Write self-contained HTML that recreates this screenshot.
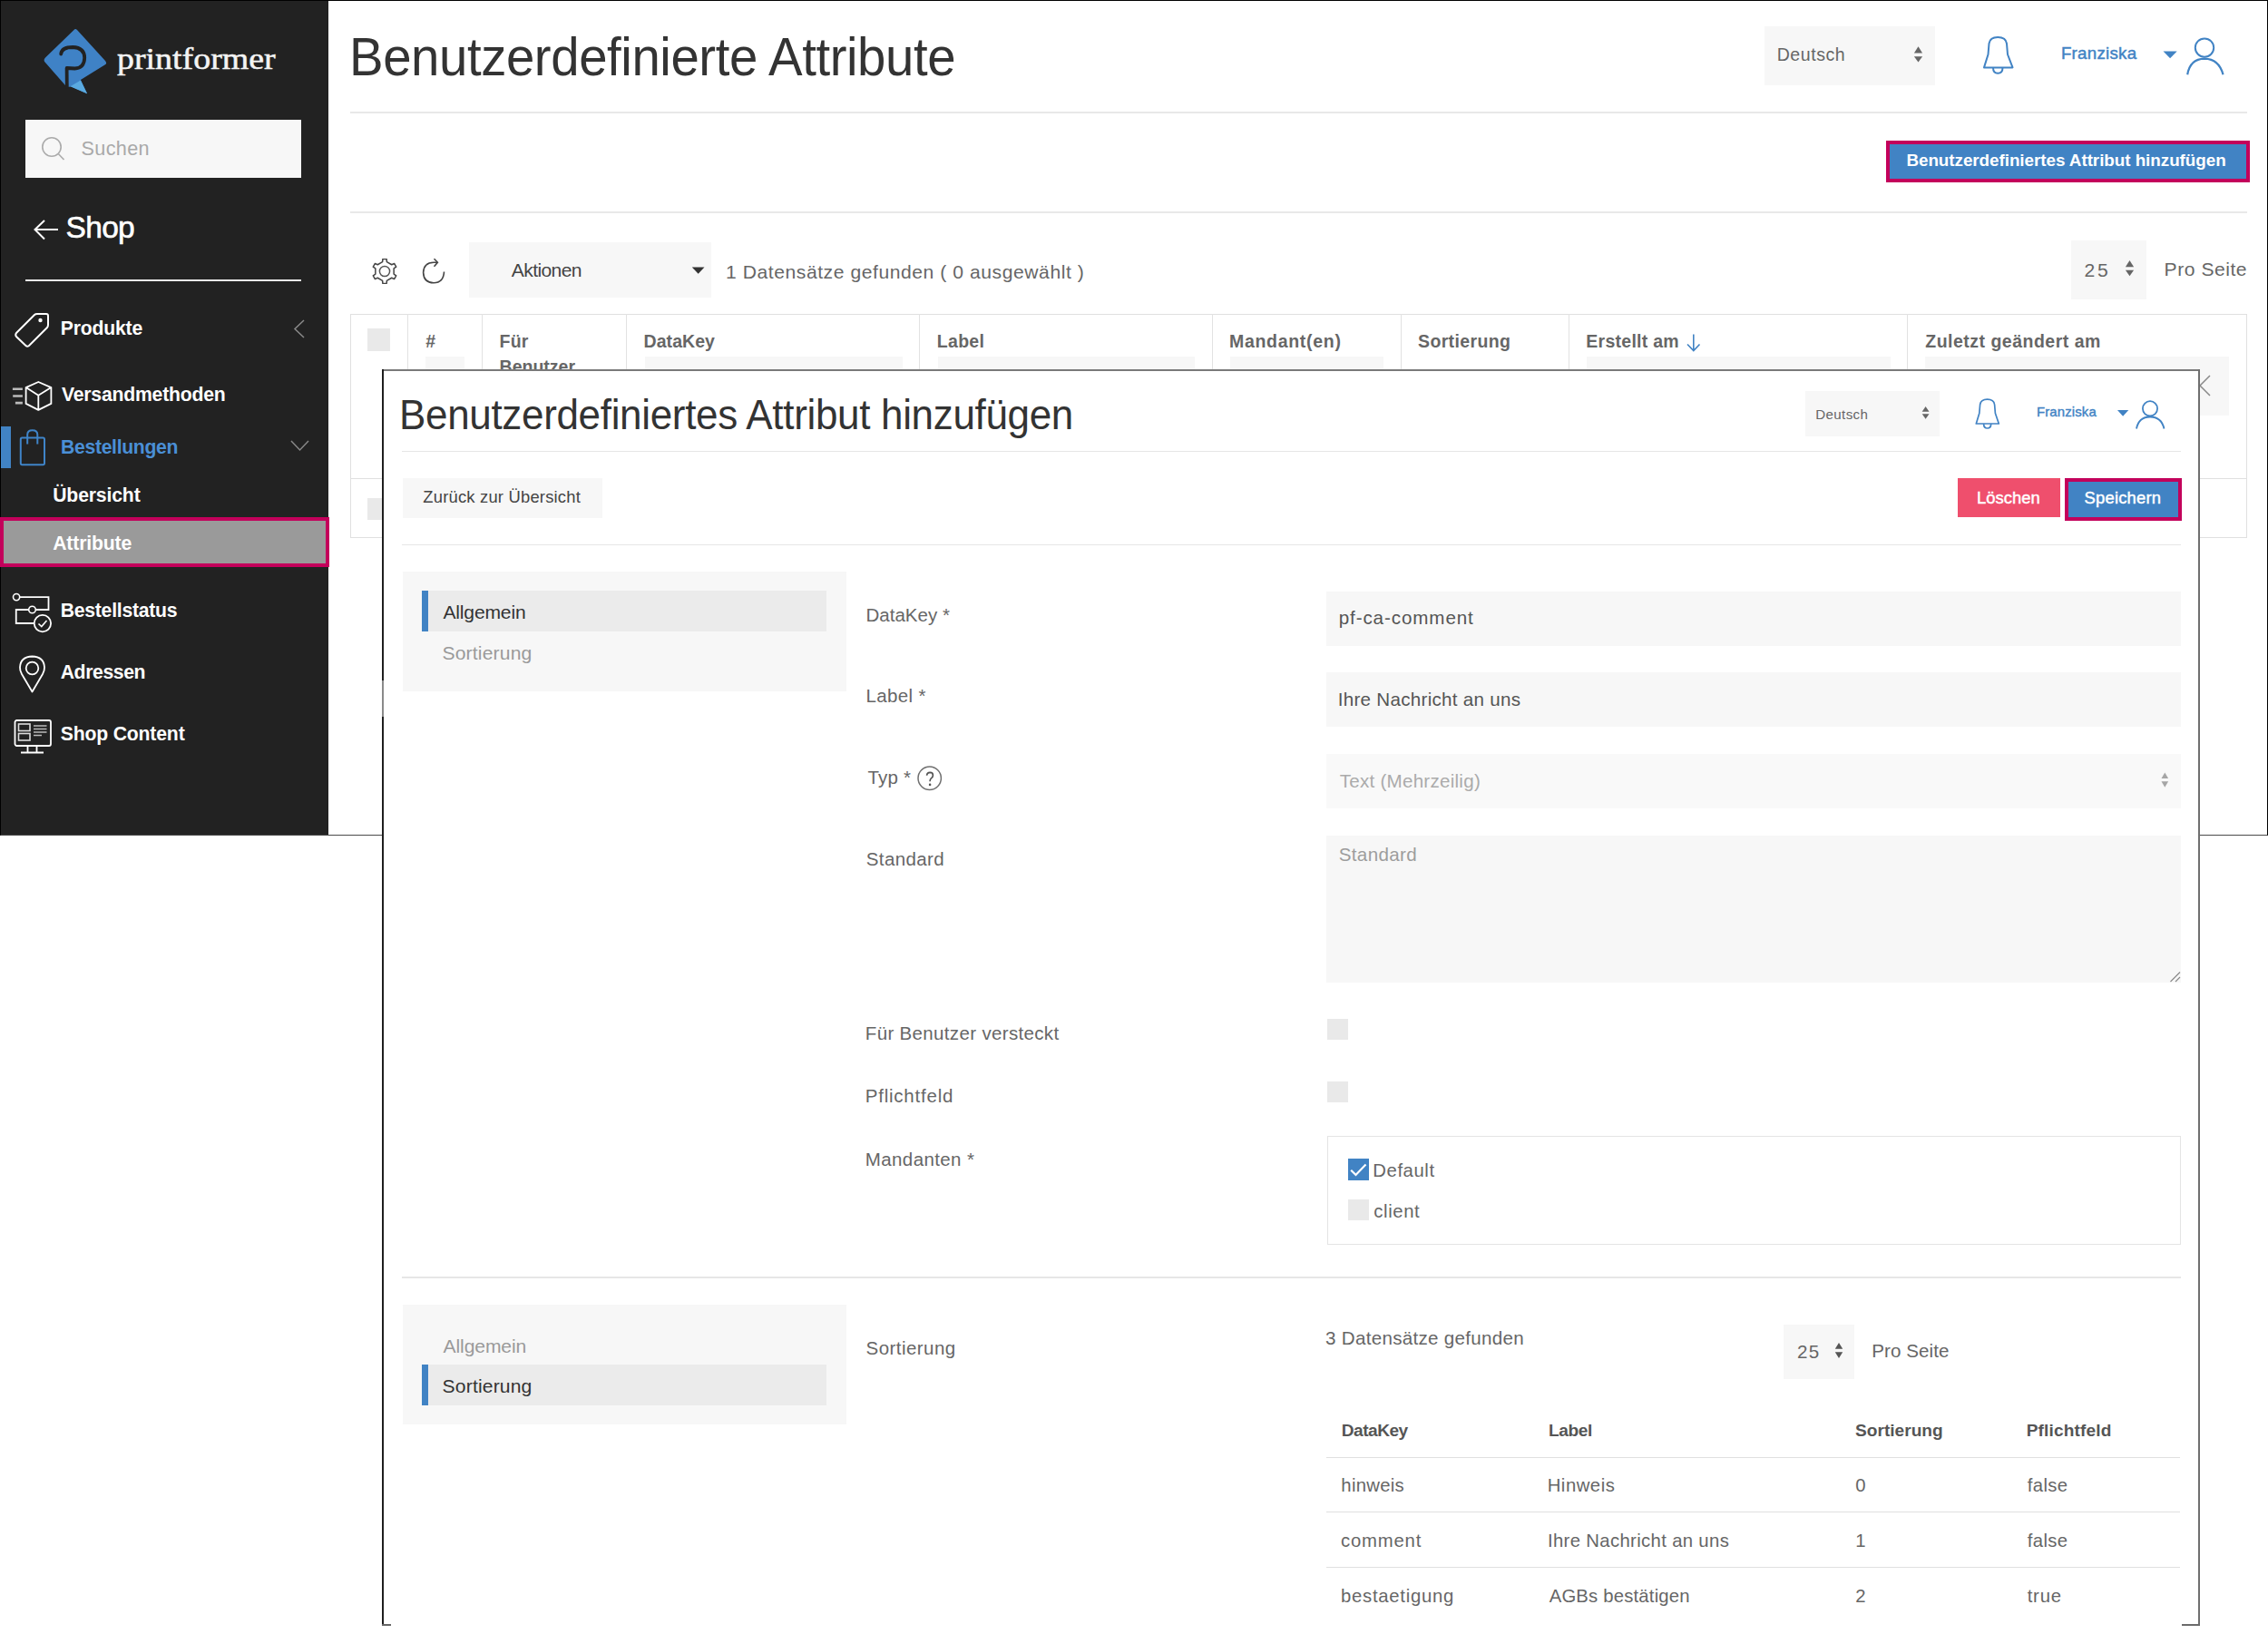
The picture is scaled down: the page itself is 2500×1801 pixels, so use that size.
<!DOCTYPE html>
<html><head><meta charset="utf-8"><title>Benutzerdefinierte Attribute</title>
<style>
html,body{margin:0;padding:0;background:#fff;width:2500px;height:1801px;overflow:hidden;position:relative}
body{font-family:"Liberation Sans",sans-serif}
.b{position:absolute;display:block}
.t{position:absolute;line-height:1;white-space:nowrap;font-family:"Liberation Sans",sans-serif}
</style></head><body>
<div class="b" style="left:0px;top:0px;width:2500px;height:921px;background:#fff;border-top:1px solid #000;border-left:1px solid #000;border-right:1px solid #000;border-bottom:1px solid #4a4a4a;box-sizing:border-box"></div>
<div class="b" style="left:1px;top:1px;width:361px;height:919px;background:#222222;"></div>
<svg class="b" style="left:40px;top:25px;" width="90" height="85" viewBox="0 0 90 85"><path d="M41.5 8 Q43 6 45 8 L76 42 Q78.5 45 75.5 46.5 L48.9 63.1 L56.1 78.3 L38.3 70.4 L33.7 71.1 L10 44 Q7.2 41.3 10 38.5 Z" fill="#3f82c6"/><path d="M37.5 70.2 L48.9 63.5 L56.1 78.3 Z" fill="#5aaae0"/><path d="M27.2 34.5 Q28 27 40.3 27 Q53 27.5 53.2 38.7 Q52.8 50 42.5 50.5 L33.6 50 L33.8 71" fill="none" stroke="#222222" stroke-width="3.8" stroke-linecap="round" stroke-linejoin="round"/></svg>
<div class="t" style="left:129px;top:47.5px;font-family:'Liberation Serif',serif;font-size:34px;font-weight:400;color:#f4f4f4;transform:scaleX(1.115);transform-origin:0 0;-webkit-text-stroke:0.5px #f4f4f4">printformer</div>
<div class="b" style="left:28px;top:132px;width:304px;height:64px;background:#f7f7f7;"></div>
<svg class="b" style="left:44px;top:148px;" width="32" height="32" viewBox="0 0 32 32"><circle cx="13" cy="14" r="10.2" fill="none" stroke="#ababab" stroke-width="1.6"/><line x1="20.5" y1="21.8" x2="26.5" y2="28" stroke="#ababab" stroke-width="1.6"/></svg>
<div class="t" style="left:89.5px;top:152.5px;font-size:21.65px;font-weight:400;color:#a9a9a9;letter-spacing:0.34px;">Suchen</div>
<svg class="b" style="left:34px;top:238px;" width="34" height="30" viewBox="0 0 34 30"><path d="M30 15 L5 15 M15 5 L4.5 15 L15 25.5" fill="none" stroke="#fff" stroke-width="2"/></svg>
<div class="t" style="left:72.6px;top:233.5px;font-size:33.52px;font-weight:400;color:#ffffff;letter-spacing:-0.73px;-webkit-text-stroke:0.6px #ffffff;">Shop</div>
<div class="b" style="left:28px;top:308px;width:304px;height:2px;background:#e8e8e8;"></div>
<svg class="b" style="left:13.3px;top:341.4px;" width="46" height="44" viewBox="0 0 46 44"><path d="M5 26 L25 6 Q26 5 28 5 L38 5 Q40 5 40 7 L40 17 Q40 19 39 20 L19 40 Q17 41.5 15.5 40 L5 30 Q3.5 28 5 26 Z" fill="none" stroke="#fff" stroke-width="2"/><circle cx="31.5" cy="12" r="2.2" fill="#fff"/></svg>
<div class="t" style="left:66.8px;top:350.8px;font-size:21.20px;font-weight:700;color:#ffffff;letter-spacing:-0.20px;">Produkte</div>
<svg class="b" style="left:320px;top:350px;" width="20" height="26" viewBox="0 0 20 26"><path d="M15 3 L5 12.5 L15 22" fill="none" stroke="#8a8a8a" stroke-width="1.5"/></svg>
<svg class="b" style="left:10px;top:415px;" width="52" height="42" viewBox="0 0 52 42"><path d="M32.3 6 L46.4 12.1 L46.4 29.9 L32.3 36.9 L18.6 29.9 L18.6 12.1 Z M18.6 12.1 L32.3 20.7 L46.4 12.1 M32.3 20.7 L32.3 36.9" fill="none" stroke="#fff" stroke-width="1.8" stroke-linejoin="round"/><path d="M3.9 13.7 L14.9 13.7 M4.2 21.5 L14.9 21.5 M6.9 29.1 L14.9 29.1" stroke="#bbb" stroke-width="2.6"/></svg>
<div class="t" style="left:68.0px;top:424.1px;font-size:21.20px;font-weight:700;color:#ffffff;letter-spacing:-0.21px;">Versandmethoden</div>
<div class="b" style="left:1px;top:470px;width:11px;height:46px;background:#4183c4;"></div>
<svg class="b" style="left:18px;top:470px;" width="36" height="48" viewBox="0 0 36 48"><rect x="4.8" y="12.6" width="26.2" height="29.6" rx="1.6" fill="none" stroke="#3f84c8" stroke-width="2"/><path d="M12.2 19.6 L12.2 9 Q12.2 4.2 17.7 4.2 Q23.3 4.2 23.3 9 L23.3 19.6" fill="none" stroke="#3f84c8" stroke-width="2"/></svg>
<div class="t" style="left:67.0px;top:481.7px;font-size:21.20px;font-weight:700;color:#4a8fd6;letter-spacing:-0.32px;">Bestellungen</div>
<svg class="b" style="left:318px;top:482px;" width="26" height="20" viewBox="0 0 26 20"><path d="M3 4 L12.5 14 L22 4" fill="none" stroke="#888" stroke-width="1.5"/></svg>
<div class="t" style="left:58.2px;top:534.8px;font-size:21.20px;font-weight:700;color:#ffffff;letter-spacing:-0.15px;">Übersicht</div>
<div class="b" style="left:0px;top:570px;width:363px;height:55px;background:#9a9a9a;border:4px solid #c3005b;box-sizing:border-box"></div>
<div class="t" style="left:58.2px;top:588.3px;font-size:21.20px;font-weight:700;color:#ffffff;letter-spacing:-0.15px;">Attribute</div>
<svg class="b" style="left:10px;top:650px;" width="50" height="50" viewBox="0 0 50 50"><circle cx="8.1" cy="8.1" r="3.6" fill="none" stroke="#fff" stroke-width="1.6"/><path d="M11.7 8.1 L43.5 8.1 L43.5 22 L29.5 22 M21.8 22 L7.75 22 L7.75 37 L27.3 37" fill="none" stroke="#fff" stroke-width="1.8"/><circle cx="25.5" cy="22" r="3.8" fill="none" stroke="#fff" stroke-width="1.6"/><circle cx="36.9" cy="37.1" r="9.2" fill="none" stroke="#fff" stroke-width="1.8"/><path d="M32.5 37.5 L35.8 40.5 L41.5 34" fill="none" stroke="#fff" stroke-width="1.6"/></svg>
<div class="t" style="left:66.7px;top:661.9px;font-size:21.20px;font-weight:700;color:#ffffff;letter-spacing:-0.25px;">Bestellstatus</div>
<svg class="b" style="left:18px;top:720px;" width="36" height="46" viewBox="0 0 36 46"><path d="M17.5 42.5 L6 23 Q3.8 19 4 15.5 Q4.5 4 17.5 3.5 Q30.5 4 31 15.5 Q31.2 19 29 23 Z" fill="none" stroke="#fff" stroke-width="1.8" stroke-linejoin="round"/><circle cx="17.5" cy="16.5" r="6.8" fill="none" stroke="#fff" stroke-width="1.8"/></svg>
<div class="t" style="left:66.7px;top:729.8px;font-size:21.20px;font-weight:700;color:#ffffff;letter-spacing:-0.39px;">Adressen</div>
<svg class="b" style="left:12px;top:790px;" width="48" height="44" viewBox="0 0 48 44"><rect x="4.5" y="4" width="39.5" height="28" rx="2" fill="none" stroke="#fff" stroke-width="1.8"/><rect x="8.5" y="8" width="12.5" height="7.5" fill="none" stroke="#ddd" stroke-width="1.6"/><rect x="8.5" y="18.5" width="12.5" height="7.5" fill="none" stroke="#ddd" stroke-width="1.6"/><path d="M25 10 L39.5 10 M25 13.5 L39.5 13.5 M25 17 L39.5 17 M25 20.5 L34 20.5" stroke="#bbb" stroke-width="1.6"/><path d="M18.5 32 L18.5 39 M28.5 32 L28.5 39 M11 39.5 L36 39.5" stroke="#fff" stroke-width="1.8"/></svg>
<div class="t" style="left:66.7px;top:798.4px;font-size:21.20px;font-weight:700;color:#ffffff;letter-spacing:-0.17px;">Shop Content</div>
<div class="t" style="left:384.5px;top:33.6px;font-size:58.40px;font-weight:400;color:#333333;letter-spacing:-0.43px;transform:scaleX(0.965);transform-origin:0 0;">Benutzerdefinierte Attribute</div>
<div class="b" style="left:386px;top:123px;width:2091px;height:2px;background:#e8e8e8;"></div>
<div class="b" style="left:1945px;top:29px;width:188px;height:65px;background:#f7f7f7;"></div>
<div class="t" style="left:1958.7px;top:51.4px;font-size:19.55px;font-weight:400;color:#666666;letter-spacing:0.55px;">Deutsch</div>
<svg class="b" style="left:0;top:0" width="2500" height="1801"><polygon points="2109.9,58.4 2119.1,58.4 2114.5,51.3" fill="#666"/><polygon points="2109.9,62.3 2119.1,62.3 2114.5,68.5" fill="#666"/></svg>
<svg class="b" style="left:2180px;top:36px;" width="46" height="50" viewBox="0 0 46 50"><path d="M7 38.4 L11.5 24 L12.5 12 Q13.5 5 22.2 5 Q31 5 32 12 L33 24 L38.5 38.4 Z" fill="none" stroke="#4183c4" stroke-width="2" stroke-linejoin="round"/><path d="M17 38.5 Q17 44.8 22.2 44.8 Q27.5 44.8 27.5 38.5" fill="none" stroke="#4183c4" stroke-width="2"/></svg>
<div class="t" style="left:2271.9px;top:50.2px;font-size:18.72px;font-weight:400;color:#4183c4;letter-spacing:0.27px;-webkit-text-stroke:0.45px #4183c4;">Franziska</div>
<svg class="b" style="left:2380px;top:52px;" width="24" height="16" viewBox="0 0 24 16"><polygon points="4.5,4.5 19.7,4.5 12.1,12.2" fill="#4183c4"/></svg>
<svg class="b" style="left:2404px;top:36px;" width="54" height="52" viewBox="0 0 54 52"><circle cx="26" cy="16.6" r="10.2" fill="none" stroke="#4183c4" stroke-width="2"/><path d="M7.2 46.2 Q10 29 26 28.6 Q42 29 46.5 46.2" fill="none" stroke="#4183c4" stroke-width="2.2"/></svg>
<div class="b" style="left:2079px;top:155px;width:401px;height:46px;background:#4183c4;border:4px solid #c3005b;box-sizing:border-box"></div>
<div class="t" style="left:2101.4px;top:168.4px;font-size:18.85px;font-weight:700;color:#ffffff;letter-spacing:-0.05px;">Benutzerdefiniertes Attribut hinzufügen</div>
<div class="b" style="left:386px;top:233px;width:2091px;height:2px;background:#e8e8e8;"></div>
<svg class="b" style="left:410px;top:285px;" width="28" height="28" viewBox="0 0 28 28"><path d="M11.62 3.67 L11.87 0.57 L16.13 0.57 L16.38 3.67 L21.75 6.77 L24.57 5.44 L26.70 9.13 L24.14 10.90 L24.14 17.10 L26.70 18.87 L24.57 22.56 L21.75 21.23 L16.38 24.33 L16.13 27.43 L11.87 27.43 L11.62 24.33 L6.25 21.23 L3.43 22.56 L1.30 18.87 L3.86 17.10 L3.86 10.90 L1.30 9.13 L3.43 5.44 L6.25 6.77 Z" fill="none" stroke="#444" stroke-width="1.5" stroke-linejoin="round"/><circle cx="14" cy="14" r="5.6" fill="none" stroke="#555" stroke-width="1.5"/></svg>
<svg class="b" style="left:462px;top:282px;" width="32" height="34" viewBox="0 0 32 34"><path d="M27.5 17.5 Q27 29.5 16 29.8 Q5 29.5 4.6 18.4 Q5 7.5 16 7.2 L20 7.2" fill="none" stroke="#444" stroke-width="1.6"/><path d="M16.5 3.3 L20.4 7.3 L16.5 11.8" fill="none" stroke="#444" stroke-width="1.6"/></svg>
<div class="b" style="left:517px;top:267px;width:267px;height:61px;background:#f7f7f7;"></div>
<div class="t" style="left:563.8px;top:287.0px;font-size:21.10px;font-weight:400;color:#444444;letter-spacing:-0.63px;">Aktionen</div>
<svg class="b" style="left:757px;top:291px;" width="26" height="14" viewBox="0 0 26 14"><polygon points="5.8,3.4 19.5,3.4 12.65,10.8" fill="#333"/></svg>
<div class="t" style="left:800.0px;top:289.1px;font-size:21.10px;font-weight:400;color:#666666;letter-spacing:0.56px;">1 Datensätze gefunden ( 0 ausgewählt )</div>
<div class="b" style="left:2282.6px;top:264.7px;width:83.4px;height:65px;background:#f7f7f7;"></div>
<div class="t" style="left:2297.6px;top:287.3px;font-size:21.10px;font-weight:400;color:#666666;letter-spacing:2.60px;">25</div>
<svg class="b" style="left:0;top:0" width="2500" height="1801"><polygon points="2342.9,294.3 2352.1,294.3 2347.5,287" fill="#666"/><polygon points="2342.9,297.7 2352.1,297.7 2347.5,304.3" fill="#666"/></svg>
<div class="t" style="left:2385.6px;top:285.9px;font-size:21.10px;font-weight:400;color:#666666;letter-spacing:0.53px;">Pro Seite</div>
<div class="b" style="left:386px;top:346px;width:2091px;height:247px;background:#fff;border:1px solid #e0e0e0;box-sizing:border-box"></div>
<div class="b" style="left:386px;top:527px;width:2091px;height:1px;background:#e0e0e0;"></div>
<div class="b" style="left:449px;top:346px;width:1px;height:182px;background:#e2e2e2;"></div>
<div class="b" style="left:531px;top:346px;width:1px;height:182px;background:#e2e2e2;"></div>
<div class="b" style="left:690px;top:346px;width:1px;height:182px;background:#e2e2e2;"></div>
<div class="b" style="left:1013px;top:346px;width:1px;height:182px;background:#e2e2e2;"></div>
<div class="b" style="left:1336px;top:346px;width:1px;height:182px;background:#e2e2e2;"></div>
<div class="b" style="left:1544px;top:346px;width:1px;height:182px;background:#e2e2e2;"></div>
<div class="b" style="left:1729px;top:346px;width:1px;height:182px;background:#e2e2e2;"></div>
<div class="b" style="left:2102px;top:346px;width:1px;height:182px;background:#e2e2e2;"></div>
<div class="b" style="left:405.3px;top:362px;width:25px;height:25px;background:#e9e9e9;"></div>
<div class="b" style="left:405.3px;top:549px;width:25px;height:24px;background:#e9e9e9;"></div>
<div class="b" style="left:469px;top:393px;width:43px;height:64.5px;background:#f7f7f7;"></div>
<div class="b" style="left:710.5px;top:393px;width:284.1px;height:64.5px;background:#f7f7f7;"></div>
<div class="b" style="left:1033.8px;top:393px;width:283.10000000000014px;height:64.5px;background:#f7f7f7;"></div>
<div class="b" style="left:1356px;top:393px;width:169.29999999999995px;height:64.5px;background:#f7f7f7;"></div>
<div class="b" style="left:1749.3px;top:393px;width:334.5000000000002px;height:64.5px;background:#f7f7f7;"></div>
<div class="b" style="left:2122.3px;top:393px;width:334.5px;height:64.5px;background:#f7f7f7;"></div>
<div class="t" style="left:469.2px;top:367.0px;font-size:19.50px;font-weight:700;color:#666666;letter-spacing:0.00px;">#</div>
<div class="t" style="left:550.6px;top:367.0px;font-size:19.50px;font-weight:700;color:#666666;letter-spacing:0.20px;">Für</div>
<div class="t" style="left:550.6px;top:395.0px;font-size:19.50px;font-weight:700;color:#666666;letter-spacing:0.00px;">Benutzer</div>
<div class="t" style="left:709.6px;top:367.0px;font-size:19.50px;font-weight:700;color:#666666;letter-spacing:0.05px;">DataKey</div>
<div class="t" style="left:1032.8px;top:367.0px;font-size:19.50px;font-weight:700;color:#666666;letter-spacing:0.30px;">Label</div>
<div class="t" style="left:1355.0px;top:367.0px;font-size:19.50px;font-weight:700;color:#666666;letter-spacing:0.70px;">Mandant(en)</div>
<div class="t" style="left:1563.0px;top:367.0px;font-size:19.50px;font-weight:700;color:#666666;letter-spacing:0.37px;">Sortierung</div>
<div class="t" style="left:1748.3px;top:367.0px;font-size:19.50px;font-weight:700;color:#666666;letter-spacing:0.27px;">Erstellt am</div>
<div class="t" style="left:2122.3px;top:367.0px;font-size:19.50px;font-weight:700;color:#666666;letter-spacing:0.49px;">Zuletzt geändert am</div>
<svg class="b" style="left:1856px;top:366px;" width="22" height="24" viewBox="0 0 22 24"><path d="M10.8 2.5 L10.8 20 M4 13.5 L10.8 20.5 L17.5 13.5" fill="none" stroke="#4183c4" stroke-width="1.6"/></svg>
<svg class="b" style="left:2410px;top:410px;" width="32" height="32" viewBox="0 0 32 32"><path d="M4 4 L26 26 M26 4 L4 26" stroke="#888" stroke-width="1.5"/></svg>
<div class="b" style="left:421px;top:407px;width:2004px;height:1385px;background:#fff;"></div>
<div class="b" style="left:421px;top:407px;width:2004px;height:1.6px;background:#7a7a7a;"></div>
<div class="b" style="left:421px;top:407px;width:1.6px;height:1385px;background:#1e1e1e;"></div>
<div class="b" style="left:421px;top:750px;width:1.6px;height:40px;background:#8a8a8a;"></div>
<div class="b" style="left:2423px;top:407px;width:2px;height:1385px;background:#6f6f6f;"></div>
<div class="b" style="left:421px;top:1790px;width:10px;height:1.7px;background:#666;"></div>
<div class="b" style="left:2405px;top:1790px;width:20px;height:1.7px;background:#6b6b6b;"></div>
<div class="b" style="left:423px;top:1792px;width:2000px;height:9px;background:#fff;"></div>
<div class="t" style="left:439.9px;top:434.5px;font-size:45.60px;font-weight:400;color:#333333;letter-spacing:-0.34px;transform:scaleX(0.965);transform-origin:0 0;">Benutzerdefiniertes Attribut hinzufügen</div>
<div class="b" style="left:1990px;top:430.7px;width:147.5px;height:50px;background:#f7f7f7;"></div>
<div class="t" style="left:2001.3px;top:448.5px;font-size:15.08px;font-weight:400;color:#666666;letter-spacing:0.38px;">Deutsch</div>
<svg class="b" style="left:0;top:0" width="2500" height="1801"><polygon points="2118.7,453.8 2126.5,453.8 2122.6,448" fill="#666"/><polygon points="2118.7,456.2 2126.5,456.2 2122.6,461.7" fill="#666"/></svg>
<svg class="b" style="left:2172px;top:436px;" width="40" height="40" viewBox="0 0 40 40"><path d="M6.3 31 L9.8 19.5 L10.6 10 Q11.5 4.2 18.6 4.2 Q25.8 4.2 26.6 10 L27.4 19.5 L31.3 31 Z" fill="none" stroke="#4183c4" stroke-width="1.7" stroke-linejoin="round"/><path d="M14.6 31 Q14.6 36 18.6 36 Q22.7 36 22.7 31" fill="none" stroke="#4183c4" stroke-width="1.7"/></svg>
<div class="t" style="left:2245.0px;top:447.1px;font-size:14.94px;font-weight:400;color:#4183c4;letter-spacing:0.12px;-webkit-text-stroke:0.4px #4183c4;">Franziska</div>
<svg class="b" style="left:2330px;top:448px;" width="20" height="14" viewBox="0 0 20 14"><polygon points="4,4 16.3,4 10.1,10.8" fill="#4183c4"/></svg>
<svg class="b" style="left:2350px;top:436px;" width="42" height="42" viewBox="0 0 42 42"><circle cx="20" cy="14.3" r="8.1" fill="none" stroke="#4183c4" stroke-width="1.8"/><path d="M5 36.5 Q7.5 23.5 20 23.5 Q32.5 23.5 35.5 36.5" fill="none" stroke="#4183c4" stroke-width="1.9"/></svg>
<div class="b" style="left:443px;top:496.5px;width:1961px;height:1.5px;background:#e6e6e6;"></div>
<div class="b" style="left:444px;top:527px;width:219.5px;height:43.5px;background:#f7f7f7;"></div>
<div class="t" style="left:466.3px;top:539.0px;font-size:18.40px;font-weight:400;color:#444444;letter-spacing:0.20px;">Zurück zur Übersicht</div>
<div class="b" style="left:2158px;top:527px;width:113px;height:43px;background:#ef4f6d;"></div>
<div class="t" style="left:2179.0px;top:539.5px;font-size:18.40px;font-weight:400;color:#ffffff;letter-spacing:0.02px;-webkit-text-stroke:0.45px #ffffff;">Löschen</div>
<div class="b" style="left:2276px;top:527px;width:129px;height:46.5px;background:#4183c4;border:4px solid #c3005b;box-sizing:border-box"></div>
<div class="t" style="left:2297.6px;top:539.5px;font-size:18.40px;font-weight:400;color:#ffffff;letter-spacing:0.19px;-webkit-text-stroke:0.45px #ffffff;">Speichern</div>
<div class="b" style="left:443px;top:599.5px;width:1961px;height:1.5px;background:#e6e6e6;"></div>
<div class="b" style="left:444px;top:630px;width:489px;height:132px;background:#f7f7f7;"></div>
<div class="b" style="left:465px;top:651.3px;width:446px;height:44.4px;background:#ebebeb;"></div>
<div class="b" style="left:465px;top:651.3px;width:7.2px;height:44.4px;background:#4183c4;"></div>
<div class="t" style="left:488.4px;top:664.1px;font-size:21.10px;font-weight:400;color:#333333;letter-spacing:-0.17px;">Allgemein</div>
<div class="t" style="left:487.4px;top:708.8px;font-size:21.10px;font-weight:400;color:#9a9a9a;letter-spacing:0.18px;">Sortierung</div>
<div class="t" style="left:954.5px;top:667.5px;font-size:20.50px;font-weight:400;color:#666666;letter-spacing:0.01px;">DataKey *</div>
<div class="t" style="left:954.5px;top:757.0px;font-size:20.50px;font-weight:400;color:#666666;letter-spacing:0.35px;">Label *</div>
<div class="t" style="left:956.5px;top:846.5px;font-size:20.50px;font-weight:400;color:#666666;letter-spacing:0.18px;">Typ *</div>
<div class="t" style="left:954.8px;top:936.8px;font-size:20.50px;font-weight:400;color:#666666;letter-spacing:0.39px;">Standard</div>
<div class="t" style="left:953.8px;top:1128.6px;font-size:20.50px;font-weight:400;color:#666666;letter-spacing:0.34px;">Für Benutzer versteckt</div>
<div class="t" style="left:953.8px;top:1197.9px;font-size:20.50px;font-weight:400;color:#666666;letter-spacing:0.77px;">Pflichtfeld</div>
<div class="t" style="left:953.8px;top:1267.7px;font-size:20.50px;font-weight:400;color:#666666;letter-spacing:0.39px;">Mandanten *</div>
<svg class="b" style="left:1009px;top:842px;" width="32" height="32" viewBox="0 0 32 32"><circle cx="15.7" cy="15.8" r="12.7" fill="none" stroke="#707070" stroke-width="1.5"/><path d="M12.6 12.8 Q12.9 9.4 16.2 9.4 Q19.4 9.6 19.4 12.4 Q19.4 14.6 17.4 15.9 Q16.1 16.9 16.1 19.3" fill="none" stroke="#555" stroke-width="1.7"/><circle cx="16.1" cy="22.9" r="1.3" fill="#555"/></svg>
<div class="b" style="left:1462px;top:651.5px;width:942px;height:60.5px;background:#f7f7f7;"></div>
<div class="b" style="left:1462px;top:741px;width:942px;height:60px;background:#f7f7f7;"></div>
<div class="b" style="left:1462px;top:831px;width:942px;height:60px;background:#f9f9f9;"></div>
<div class="b" style="left:1462px;top:921px;width:942px;height:162px;background:#f7f7f7;"></div>
<div class="t" style="left:1475.7px;top:671.1px;font-size:20.60px;font-weight:400;color:#555555;letter-spacing:0.90px;">pf-ca-comment</div>
<div class="t" style="left:1474.7px;top:761.3px;font-size:20.60px;font-weight:400;color:#555555;letter-spacing:0.28px;">Ihre Nachricht an uns</div>
<div class="t" style="left:1476.7px;top:851.0px;font-size:20.60px;font-weight:400;color:#ababab;letter-spacing:0.25px;">Text (Mehrzeilig)</div>
<div class="t" style="left:1475.7px;top:931.9px;font-size:20.60px;font-weight:400;color:#9d9d9d;letter-spacing:0.36px;">Standard</div>
<svg class="b" style="left:0;top:0" width="2500" height="1801"><polygon points="2382.5,858.0 2390.1000000000004,858.0 2386.3,851.5" fill="#a6a6a6"/><polygon points="2382.5,861.3 2390.1000000000004,861.3 2386.3,867.8" fill="#a6a6a6"/></svg>
<svg class="b" style="left:2386px;top:1066px;" width="18" height="18" viewBox="0 0 18 18"><path d="M17 5.5 L6.5 16 M17 11 L12 16" stroke="#888" stroke-width="1.1"/></svg>
<div class="b" style="left:1463px;top:1123px;width:23px;height:22.5px;background:#e9e9e9;"></div>
<div class="b" style="left:1463px;top:1192px;width:23px;height:23px;background:#e9e9e9;"></div>
<div class="b" style="left:1463px;top:1252px;width:941px;height:120px;background:#fff;border:1px solid #e4e4e4;box-sizing:border-box"></div>
<div class="b" style="left:1486px;top:1277.4px;width:23px;height:23.2px;background:#4183c4;"></div>
<svg class="b" style="left:1486px;top:1277px;" width="23" height="24" viewBox="0 0 23 24"><path d="M3.2 12.7 L8.5 18 L19.5 6.5" fill="none" stroke="#fff" stroke-width="2.2"/></svg>
<div class="b" style="left:1486px;top:1322.2px;width:23px;height:23.2px;background:#e9e9e9;"></div>
<div class="t" style="left:1513.3px;top:1280.4px;font-size:20.30px;font-weight:400;color:#666666;letter-spacing:0.58px;">Default</div>
<div class="t" style="left:1514.3px;top:1325.2px;font-size:20.30px;font-weight:400;color:#666666;letter-spacing:0.60px;">client</div>
<div class="b" style="left:443px;top:1407px;width:1961px;height:1.5px;background:#e6e6e6;"></div>
<div class="b" style="left:444px;top:1438px;width:489px;height:132px;background:#f7f7f7;"></div>
<div class="b" style="left:465px;top:1504.4px;width:446px;height:44.5px;background:#ebebeb;"></div>
<div class="b" style="left:465px;top:1504.4px;width:7.2px;height:44.5px;background:#4183c4;"></div>
<div class="t" style="left:488.6px;top:1472.5px;font-size:21.10px;font-weight:400;color:#9a9a9a;letter-spacing:-0.12px;">Allgemein</div>
<div class="t" style="left:487.6px;top:1517.0px;font-size:21.10px;font-weight:400;color:#333333;letter-spacing:0.16px;">Sortierung</div>
<div class="t" style="left:954.5px;top:1475.6px;font-size:20.50px;font-weight:400;color:#666666;letter-spacing:0.46px;">Sortierung</div>
<div class="t" style="left:1461.0px;top:1465.3px;font-size:20.60px;font-weight:400;color:#666666;letter-spacing:0.29px;">3 Datensätze gefunden</div>
<div class="b" style="left:1966px;top:1459.5px;width:78px;height:60px;background:#f7f7f7;"></div>
<div class="t" style="left:1981.0px;top:1480.2px;font-size:20.60px;font-weight:400;color:#666666;letter-spacing:1.20px;">25</div>
<div class="t" style="left:2063.2px;top:1479.3px;font-size:20.60px;font-weight:400;color:#666666;letter-spacing:0.06px;">Pro Seite</div>
<svg class="b" style="left:0;top:0" width="2500" height="1801"><polygon points="2022.8,1486.8 2031.2,1486.8 2027,1480" fill="#555"/><polygon points="2022.8,1490.3 2031.2,1490.3 2027,1497.0" fill="#555"/></svg>
<div class="t" style="left:1478.8px;top:1566.5px;font-size:19.10px;font-weight:700;color:#555555;letter-spacing:-0.50px;">DataKey</div>
<div class="t" style="left:1707.0px;top:1566.5px;font-size:19.10px;font-weight:700;color:#555555;letter-spacing:-0.40px;">Label</div>
<div class="t" style="left:2045.1px;top:1566.5px;font-size:19.10px;font-weight:700;color:#555555;letter-spacing:0.00px;">Sortierung</div>
<div class="t" style="left:2233.7px;top:1566.5px;font-size:19.10px;font-weight:700;color:#555555;letter-spacing:0.14px;">Pflichtfeld</div>
<div class="b" style="left:1462px;top:1606px;width:940.5px;height:1px;background:#e0e0e0;"></div>
<div class="b" style="left:1462px;top:1666px;width:940.5px;height:1px;background:#e0e0e0;"></div>
<div class="b" style="left:1462px;top:1727px;width:940.5px;height:1px;background:#e0e0e0;"></div>
<div class="t" style="left:1478.3px;top:1627.2px;font-size:20.30px;font-weight:400;color:#666666;letter-spacing:0.30px;">hinweis</div>
<div class="t" style="left:1705.7px;top:1627.2px;font-size:20.30px;font-weight:400;color:#666666;letter-spacing:0.52px;">Hinweis</div>
<div class="t" style="left:2045.3px;top:1627.2px;font-size:20.30px;font-weight:400;color:#666666;letter-spacing:0.00px;">0</div>
<div class="t" style="left:2234.7px;top:1627.2px;font-size:20.30px;font-weight:400;color:#666666;letter-spacing:0.40px;">false</div>
<div class="t" style="left:1478.1px;top:1687.8px;font-size:20.30px;font-weight:400;color:#666666;letter-spacing:0.80px;">comment</div>
<div class="t" style="left:1706.0px;top:1687.8px;font-size:20.30px;font-weight:400;color:#666666;letter-spacing:0.35px;">Ihre Nachricht an uns</div>
<div class="t" style="left:2045.3px;top:1687.8px;font-size:20.30px;font-weight:400;color:#666666;letter-spacing:0.00px;">1</div>
<div class="t" style="left:2234.7px;top:1687.8px;font-size:20.30px;font-weight:400;color:#666666;letter-spacing:0.40px;">false</div>
<div class="t" style="left:1478.1px;top:1748.6px;font-size:20.30px;font-weight:400;color:#666666;letter-spacing:0.72px;">bestaetigung</div>
<div class="t" style="left:1707.7px;top:1748.6px;font-size:20.30px;font-weight:400;color:#666666;letter-spacing:0.19px;">AGBs bestätigen</div>
<div class="t" style="left:2045.3px;top:1748.6px;font-size:20.30px;font-weight:400;color:#666666;letter-spacing:0.00px;">2</div>
<div class="t" style="left:2234.7px;top:1748.6px;font-size:20.30px;font-weight:400;color:#666666;letter-spacing:0.80px;">true</div>
</body></html>
